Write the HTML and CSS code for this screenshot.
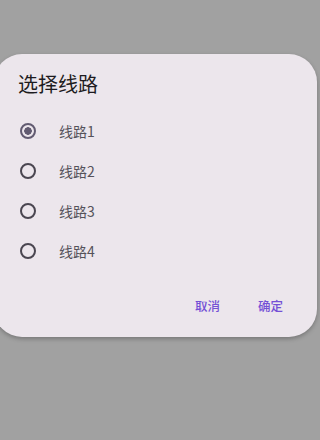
FILE: index.html
```html
<!DOCTYPE html>
<html>
<head>
    <title>选择线路</title>
    <link rel="stylesheet" href="styles.css">
</head>
<body>
    <div class="dialog">
        <h1 class="dialog-title">选择线路</h1>
        <div class="options">
            <label class="option">
                <input type="radio" name="route" value="1" checked>
                <span class="radio"></span>
                <span class="option-text">线路1</span>
            </label>
            <label class="option">
                <input type="radio" name="route" value="2">
                <span class="radio"></span>
                <span class="option-text">线路2</span>
            </label>
            <label class="option">
                <input type="radio" name="route" value="3">
                <span class="radio"></span>
                <span class="option-text">线路3</span>
            </label>
            <label class="option">
                <input type="radio" name="route" value="4">
                <span class="radio"></span>
                <span class="option-text">线路4</span>
            </label>
        </div>
        <div class="actions">
            <button class="btn-text">取消</button>
            <button class="btn-text">确定</button>
        </div>
    </div>
</body>
</html>
```

FILE: styles.css
```css
html,
body {
    margin: 0;
    height: 100%;
}

body {
    font-family: "Noto Sans CJK SC", "Noto Sans", sans-serif;
    background-color: #a1a1a1;
    overflow: hidden;
}

.dialog {
    width: 323px;
    height: 283px;
    margin: 54px 0 0 -6px;
    box-sizing: border-box;
    padding: 16px 22px 12px 0;
    background-color: #ece6ec;
    border-radius: 28px;
    box-shadow: 0 2px 4px rgba(0, 0, 0, 0.25);
    display: flex;
    flex-direction: column;
}

.dialog-title {
    margin: 0 0 13px 24px;
    font-size: 20px;
    font-weight: normal;
    line-height: 28px;
    color: #1d1b20;
}

.options {
    display: flex;
    flex-direction: column;
}

.option {
    display: flex;
    align-items: center;
    height: 40px;
    padding-left: 24px;
    cursor: pointer;
}

.option input {
    display: none;
}

.radio {
    width: 20px;
    height: 20px;
    display: flex;
    align-items: center;
    justify-content: center;
}

.radio::before {
    content: "";
    width: 12px;
    height: 12px;
    border: 2px solid #4a4650;
    border-radius: 50%;
}

.option input:checked + .radio::before {
    border-color: #625b71;
    background: radial-gradient(circle, #625b71 0 3.5px, transparent 4px);
}

.option-text {
    margin-left: 21px;
    font-size: 14px;
    color: #55525a;
}

.actions {
    margin-top: auto;
    display: flex;
    justify-content: flex-end;
    gap: 14px;
}

.btn-text {
    height: 40px;
    padding: 0 12px;
    border: none;
    background: none;
    font-family: inherit;
    font-size: 12.5px;
    font-weight: 500;
    color: #7450d6;
    cursor: pointer;
}
```
